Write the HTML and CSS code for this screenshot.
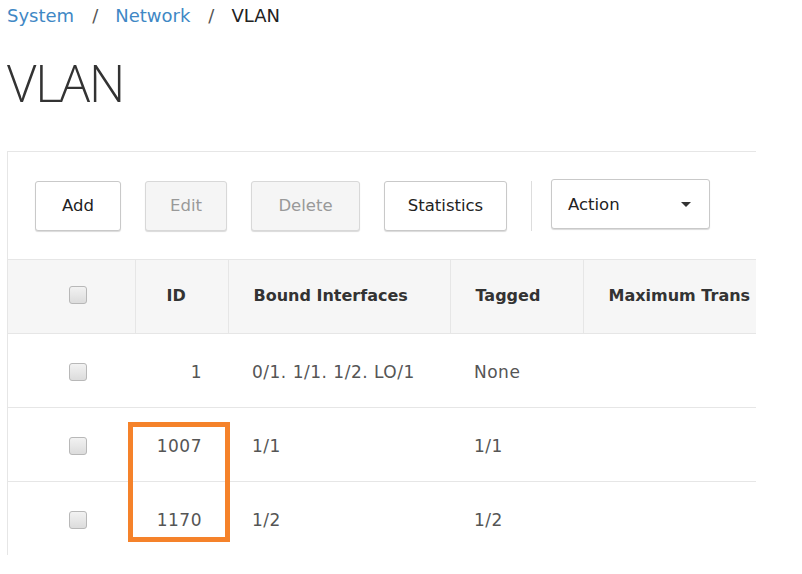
FILE: index.html
```html
<!DOCTYPE html>
<html>
<head>
<meta charset="utf-8">
<link rel="stylesheet" href="styles.css">
</head>
<body>
<nav class="crumbs"><a class="crumb-link">System</a><span class="sep">/</span><a class="crumb-link">Network</a><span class="sep">/</span><span class="crumb-cur">VLAN</span></nav>
<h1 class="title">VLAN</h1>
<div class="panel">
  <div class="toolbar">
    <button class="btn">Add</button>
    <button class="btn disabled">Edit</button>
    <button class="btn disabled">Delete</button>
    <button class="btn">Statistics</button>
    <span class="divider"></span>
    <button class="btn select"><span>Action</span><span class="caret"></span></button>
  </div>
  <div class="table-wrap">
    <table class="grid">
      <colgroup><col class="c1"><col class="c2"><col class="c3"><col class="c4"><col class="c5"></colgroup>
      <thead>
        <tr><th class="chk"><span class="box"></span></th><th class="id">ID</th><th>Bound Interfaces</th><th>Tagged</th><th>Maximum Trans</th></tr>
      </thead>
      <tbody>
        <tr><td class="chk"><span class="box"></span></td><td class="id">1</td><td>0/1. 1/1. 1/2. LO/1</td><td>None</td><td></td></tr>
        <tr><td class="chk"><span class="box"></span></td><td class="id">1007</td><td>1/1</td><td>1/1</td><td></td></tr>
        <tr><td class="chk"><span class="box"></span></td><td class="id">1170</td><td>1/2</td><td>1/2</td><td></td></tr>
      </tbody>
    </table>
    <div class="highlight"></div>
  </div>
</div>
</body>
</html>
```
FILE: styles.css
```css
html, body { margin: 0; padding: 0; background: #fff; }
body { font-family: "DejaVu Sans", "Open Sans", sans-serif; color: #333; padding-left: 7px; width: 795px; height: 574px; overflow: hidden; }
.crumbs { font-size: 18px; line-height: 24px; padding-top: 4px; height: 28px; display: flex; }
.crumb-link { color: #3f88c5; }
.sep { color: #555; margin: 0 17px 0 18px; }
.crumb-cur { color: #222; }
.title { font-family: "Open Sans", sans-serif; font-size: 51px; font-weight: 300; letter-spacing: -1.5px; line-height: 60px; margin: 20px 0 0 0; height: 99px; color: #333; }
.panel { width: 748px; border-top: 1px solid #e6e6e6; border-left: 1px solid #e6e6e6; overflow: hidden; }
.toolbar { height: 108px; border-bottom: 1px solid #e6e6e6; display: flex; align-items: center; padding-left: 27px; box-sizing: border-box; }
.btn { font-family: inherit; font-size: 16.5px; height: 50px; border: 1px solid #c9c9c9; border-radius: 3px; background: #fff; color: #222; box-shadow: 0 1px 1px rgba(0,0,0,0.15); margin-right: 24px; padding: 0; }
.btn:nth-child(1) { width: 86px; }
.btn:nth-child(2) { width: 82px; }
.btn:nth-child(3) { width: 109px; }
.btn:nth-child(4) { width: 123px; margin-right: 24px; }
.btn.disabled { background: #f5f5f5; color: #999; border-color: #d8d8d8; }
.divider { width: 1px; height: 50px; background: #ddd; margin-right: 19px; }
.select { width: 159px; display: flex; align-items: center; justify-content: space-between; padding: 0 18px 0 16px; margin-top: -3px; }
.caret { width: 0; height: 0; border-left: 5px solid transparent; border-right: 5px solid transparent; border-top: 5px solid #333; }
.table-wrap { position: relative; }
.grid { border-collapse: collapse; table-layout: fixed; width: 1000px; font-size: 16px; }
.c1 { width: 127px; } .c2 { width: 93px; } .c3 { width: 222px; } .c4 { width: 133px; } .c5 { width: 425px; }
.grid th { background: #f6f6f6; height: 73px; text-align: left; font-weight: 700; color: #333; padding: 0 0 2px 25px; border-right: 1px solid #e6e6e6; border-bottom: 1px solid #e6e6e6; white-space: nowrap; box-sizing: border-box; }
.grid td { height: 74px; color: #555; font-size: 17px; letter-spacing: 0.5px; padding: 3px 0 0 24px; border-bottom: 1px solid #e6e6e6; white-space: nowrap; box-sizing: border-box; }
.grid tbody tr:last-child td { border-bottom: none; }
.grid .chk { padding-left: 61px; }
.grid th.id { padding-left: 31px; }
.grid td.id { text-align: right; padding: 3px 26px 0 0; }
.box { display: block; width: 16px; height: 16px; border: 1px solid #b8b8b8; border-radius: 3px; background: linear-gradient(#f2f2f2, #dcdcdc); }
.highlight { position: absolute; left: 120px; top: 162px; width: 92px; height: 110px; border: 5px solid #f5822a; }
```
